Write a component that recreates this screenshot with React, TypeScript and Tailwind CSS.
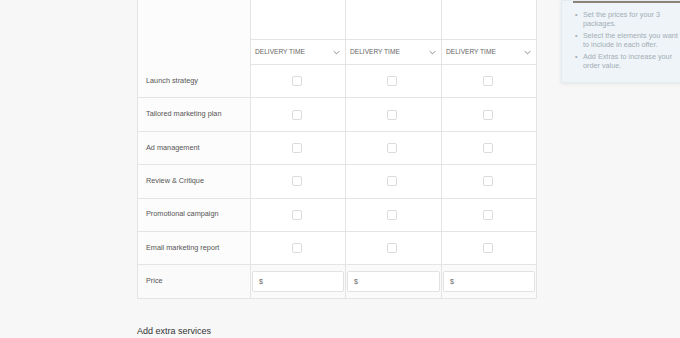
import React from "react";

const rows = [
  "Launch strategy",
  "Tailored marketing plan",
  "Ad management",
  "Review & Critique",
  "Promotional campaign",
  "Email marketing report",
];

const tips = [
  "Set the prices for your 3 packages.",
  "Select the elements you want to include in each offer.",
  "Add Extras to increase your order value.",
];

const Chevron = () => (
  <svg width="7" height="5" viewBox="0 0 10 6" fill="none" className="text-[#888]">
    <path d="M1 1l4 4 4-4" stroke="currentColor" strokeWidth="1.4" />
  </svg>
);

const App = () => {
  const cols = [0, 1, 2];

  return (
    <div
      className="h-[338px] w-[680px] overflow-hidden bg-[#f7f7f7] flex"
      style={{ fontFamily: '"Liberation Sans", Arial, sans-serif' }}
    >
      <div className="ml-[137px] w-[400px] shrink-0 flex flex-col">
        <div className="grid grid-cols-[113px_95px_96px_95px] w-[400px] border-l border-[#e4e4e4] bg-white">
          {/* header */}
          <div className="row-span-2 border-r border-[#e4e4e4] bg-[#fcfcfc]" />
          {cols.map((c) => (
            <div key={"top" + c} className="h-[40px] border-r border-b border-[#e4e4e4]" />
          ))}
          {cols.map((c) => (
            <div
              key={"dt" + c}
              className="h-[25px] border-r border-b border-[#e4e4e4] flex items-center justify-between pl-[4px] pr-[5px]"
            >
              <span className="text-[6.6px] text-[#666]">DELIVERY TIME</span>
              <Chevron />
            </div>
          ))}

          {rows.map((r) => (
            <React.Fragment key={r}>
              <div className="h-[33.4px] border-r border-b border-[#e4e4e4] bg-[#fcfcfc] flex items-center pl-[8px] text-[7.3px] text-[#555]">
                {r}
              </div>
              {cols.map((c) => (
                <div
                  key={r + c}
                  className="h-[33.4px] border-r border-b border-[#e4e4e4] flex items-center justify-center pr-[3px]"
                >
                  <div className="w-[10px] h-[10px] border border-[#dcdcdc] rounded-[2px] bg-white" />
                </div>
              ))}
            </React.Fragment>
          ))}

          <div className="h-[33.4px] border-r border-b border-[#e4e4e4] bg-[#fafafa] flex items-center pl-[8px] text-[7.3px] text-[#555]">
            Price
          </div>
          {cols.map((c) => (
            <div
              key={"p" + c}
              className="h-[33.4px] border-r border-b border-[#e4e4e4] bg-[#fafafa] pt-[6px] px-[1px]"
            >
              <div className="h-[21px] bg-white border border-[#e2e2e2] rounded-[2px] flex items-center pl-[6px] text-[7px] text-[#666]">
                $
              </div>
            </div>
          ))}
        </div>

        <div className="mt-[26px] text-[9px] text-[#333]">Add extra services</div>
      </div>

      <div className="ml-[24px] shrink-0 w-[130px] h-[83px] bg-[#eef4f8] shadow-[0_1px_4px_rgba(0,0,0,0.08)] border border-[#e3ecf1] pl-[11px]">
        <div className="h-[2px] bg-[#8c8478]" />
        <ul className="mt-[7px] flex flex-col gap-[3px] w-[112px]">
          {tips.map((t) => (
            <li key={t} className="flex text-[7.25px] leading-[9px] text-[#a3adb5]">
              <span className="w-[10px] shrink-0 pl-[2px]">•</span>
              <span>{t}</span>
            </li>
          ))}
        </ul>
      </div>
    </div>
  );
};

export default App;
